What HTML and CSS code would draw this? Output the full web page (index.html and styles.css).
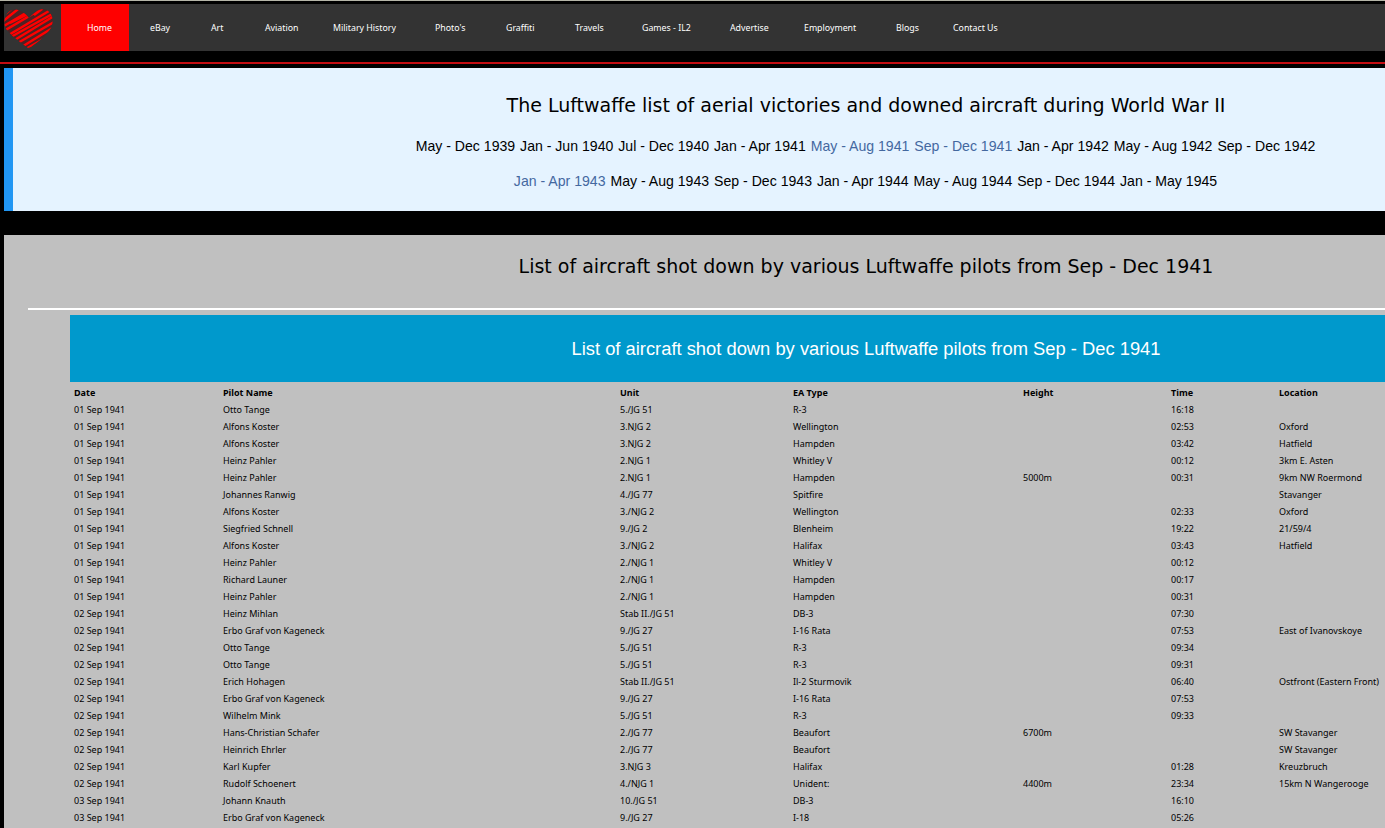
FILE: index.html
```html
<!DOCTYPE html>
<html lang="en">
<head>
<meta charset="utf-8">
<title>Luftwaffe list of aerial victories</title>
<link rel="stylesheet" href="styles.css">
</head>
<body>
<div class="page">
<nav class="topbar">
  <a class="logo" href="#" aria-label="Home">
    <svg width="50" height="44" viewBox="0 0 50 44">
      <defs>
        <clipPath id="heart-shape"><path d="M25 13C20 6 12 2 6 6 0 10-1 18 2 24c4 5 9 9 14 13l8 6 3-1c8-6 15-11 20-19 3-7 2-14-4-18-6-3-12 2-18 8z"/></clipPath>
      </defs>
      <g clip-path="url(#heart-shape)">
        <path class="heart-base" d="M0 0H50V44H0z"/>
        <path class="heart-scribble" d="M-2 12 12 0M-2 17 18 1M-2 22 27 5M0 26 44 0M3 31 50 3M5 33 50 8M9 36 50 11M12 39 50 17M16 43 50 22M20 45 50 28M25 47 50 34M6 18 24 9M30 10 38 4"/>
      </g>
    </svg>
  </a>
  <ul class="menu">
    <li><a class="active" href="#">Home</a></li>
    <li><a href="#">eBay</a></li>
    <li><a href="#">Art</a></li>
    <li><a href="#">Aviation</a></li>
    <li><a href="#">Military History</a></li>
    <li><a href="#">Photo's</a></li>
    <li><a href="#">Graffiti</a></li>
    <li><a href="#">Travels</a></li>
    <li><a href="#">Games - IL2</a></li>
    <li><a href="#">Advertise</a></li>
    <li><a href="#">Employment</a></li>
    <li><a href="#">Blogs</a></li>
    <li><a href="#">Contact Us</a></li>
  </ul>
</nav>
<div class="redline"></div>
<section class="intro">
  <h1 class="title">The Luftwaffe list of aerial victories and downed aircraft during World War II</h1>
  <p class="periods">
    <a href="#">May - Dec 1939</a> <a href="#">Jan - Jun 1940</a> <a href="#">Jul - Dec 1940</a> <a href="#">Jan - Apr 1941</a> <a class="seen" href="#">May - Aug 1941</a> <a class="seen" href="#">Sep - Dec 1941</a> <a href="#">Jan - Apr 1942</a> <a href="#">May - Aug 1942</a> <a href="#">Sep - Dec 1942</a>
  </p>
  <p class="periods">
    <a class="seen" href="#">Jan - Apr 1943</a> <a href="#">May - Aug 1943</a> <a href="#">Sep - Dec 1943</a> <a href="#">Jan - Apr 1944</a> <a href="#">May - Aug 1944</a> <a href="#">Sep - Dec 1944</a> <a href="#">Jan - May 1945</a>
  </p>
</section>
<section class="content">
  <h2 class="title content-title">List of aircraft shot down by various Luftwaffe pilots from Sep - Dec 1941</h2>
  <hr class="rule">
  <div class="listing">
    <div class="band">List of aircraft shot down by various Luftwaffe pilots from Sep - Dec 1941</div>
    <table class="victories">
      <thead>
        <tr><th class="c-date">Date</th><th class="c-pilot">Pilot Name</th><th class="c-unit">Unit</th><th class="c-type">EA Type</th><th class="c-height">Height</th><th class="c-time">Time</th><th>Location</th></tr>
      </thead>
      <tbody>
        <tr><td>01 Sep 1941</td><td>Otto Tange</td><td>5./JG 51</td><td>R-3</td><td></td><td>16:18</td><td></td></tr>
        <tr><td>01 Sep 1941</td><td>Alfons Koster</td><td>3.NJG 2</td><td>Wellington</td><td></td><td>02:53</td><td>Oxford</td></tr>
        <tr><td>01 Sep 1941</td><td>Alfons Koster</td><td>3.NJG 2</td><td>Hampden</td><td></td><td>03:42</td><td>Hatfield</td></tr>
        <tr><td>01 Sep 1941</td><td>Heinz Pahler</td><td>2.NJG 1</td><td>Whitley V</td><td></td><td>00:12</td><td>3km E. Asten</td></tr>
        <tr><td>01 Sep 1941</td><td>Heinz Pahler</td><td>2.NJG 1</td><td>Hampden</td><td>5000m</td><td>00:31</td><td>9km NW Roermond</td></tr>
        <tr><td>01 Sep 1941</td><td>Johannes Ranwig</td><td>4./JG 77</td><td>Spitfire</td><td></td><td></td><td>Stavanger</td></tr>
        <tr><td>01 Sep 1941</td><td>Alfons Koster</td><td>3./NJG 2</td><td>Wellington</td><td></td><td>02:33</td><td>Oxford</td></tr>
        <tr><td>01 Sep 1941</td><td>Siegfried Schnell</td><td>9./JG 2</td><td>Blenheim</td><td></td><td>19:22</td><td>21/59/4</td></tr>
        <tr><td>01 Sep 1941</td><td>Alfons Koster</td><td>3./NJG 2</td><td>Halifax</td><td></td><td>03:43</td><td>Hatfield</td></tr>
        <tr><td>01 Sep 1941</td><td>Heinz Pahler</td><td>2./NJG 1</td><td>Whitley V</td><td></td><td>00:12</td><td></td></tr>
        <tr><td>01 Sep 1941</td><td>Richard Launer</td><td>2./NJG 1</td><td>Hampden</td><td></td><td>00:17</td><td></td></tr>
        <tr><td>01 Sep 1941</td><td>Heinz Pahler</td><td>2./NJG 1</td><td>Hampden</td><td></td><td>00:31</td><td></td></tr>
        <tr><td>02 Sep 1941</td><td>Heinz Mihlan</td><td>Stab II./JG 51</td><td>DB-3</td><td></td><td>07:30</td><td></td></tr>
        <tr><td>02 Sep 1941</td><td>Erbo Graf von Kageneck</td><td>9./JG 27</td><td>I-16 Rata</td><td></td><td>07:53</td><td>East of Ivanovskoye</td></tr>
        <tr><td>02 Sep 1941</td><td>Otto Tange</td><td>5./JG 51</td><td>R-3</td><td></td><td>09:34</td><td></td></tr>
        <tr><td>02 Sep 1941</td><td>Otto Tange</td><td>5./JG 51</td><td>R-3</td><td></td><td>09:31</td><td></td></tr>
        <tr><td>02 Sep 1941</td><td>Erich Hohagen</td><td>Stab II./JG 51</td><td>Il-2 Sturmovik</td><td></td><td>06:40</td><td>Ostfront (Eastern Front)</td></tr>
        <tr><td>02 Sep 1941</td><td>Erbo Graf von Kageneck</td><td>9./JG 27</td><td>I-16 Rata</td><td></td><td>07:53</td><td></td></tr>
        <tr><td>02 Sep 1941</td><td>Wilhelm Mink</td><td>5./JG 51</td><td>R-3</td><td></td><td>09:33</td><td></td></tr>
        <tr><td>02 Sep 1941</td><td>Hans-Christian Schafer</td><td>2./JG 77</td><td>Beaufort</td><td>6700m</td><td></td><td>SW Stavanger</td></tr>
        <tr><td>02 Sep 1941</td><td>Heinrich Ehrler</td><td>2./JG 77</td><td>Beaufort</td><td></td><td></td><td>SW Stavanger</td></tr>
        <tr><td>02 Sep 1941</td><td>Karl Kupfer</td><td>3.NJG 3</td><td>Halifax</td><td></td><td>01:28</td><td>Kreuzbruch</td></tr>
        <tr><td>02 Sep 1941</td><td>Rudolf Schoenert</td><td>4./NJG 1</td><td>Unident:</td><td>4400m</td><td>23:34</td><td>15km N Wangerooge</td></tr>
        <tr><td>03 Sep 1941</td><td>Johann Knauth</td><td>10./JG 51</td><td>DB-3</td><td></td><td>16:10</td><td></td></tr>
        <tr><td>03 Sep 1941</td><td>Erbo Graf von Kageneck</td><td>9./JG 27</td><td>I-18</td><td></td><td>05:26</td><td></td></tr>
      </tbody>
    </table>
  </div>
</section>
</div>
</body>
</html>
```
FILE: styles.css
```css
* { box-sizing: border-box; }
html, body { margin: 0; height: 828px; overflow: hidden; background: #000; }
body { border-top: 1px solid #b5b5a8; }
.page { width: 1728px; padding: 3px 0 0 4px; font-family: "DejaVu Sans", sans-serif; color: #000; }
.topbar { display: flex; height: 47px; background: #333; }
.logo { display: block; width: 57px; padding: 1px 0 0 0; }
.logo svg { display: block; }
.heart-base { fill: #4d2224; }
.heart-scribble { fill: none; stroke: #f00; stroke-width: 2.4; }
.menu { list-style: none; margin: 0; padding: 0; display: grid; grid-template-columns: 68px 61px 54px 68px 102px 71px 69px 67px 88px 74px 92px 57px 100px; font-family: "Noto Sans", sans-serif; }
.menu a { display: block; height: 47px; padding-left: 21px; line-height: 48px; color: #fff; font-size: 8.8px; text-decoration: none; white-space: nowrap; }
.menu a.active { background: #f00; padding-left: 26px; }
.redline { height: 2px; margin: 11px 0 4px -4px; background: #c40d12; }
.intro { height: 143px; padding: 25px 0 0; background: #e5f3ff; border-left: 9px solid #2196f3; text-align: center; }
.title { margin: 0; font-weight: 400; font-size: 19px; line-height: 24px; }
.periods { margin: 0; font-family: "Liberation Sans", sans-serif; font-size: 14.1px; line-height: 17px; }
.intro .title { margin-bottom: 21px; padding-right: 9px; }
.periods + .periods { margin-top: 18px; }
.intro .periods { padding-right: 9px; }
.periods a { color: #000; text-decoration: none; margin-right: 1px; }
.periods a.seen { color: #44689f; }
.content { margin-top: 24px; min-height: 600px; background: #c0c0c0; padding-top: 19px; }
.content-title { text-align: center; }
.rule { height: 2px; margin: 30px 0 5px 24px; border: 0; background: #fff; }
.listing { margin-left: 66px; }
.band { height: 67px; background: #0099cc; color: #fff; font-family: "Liberation Sans", sans-serif; font-size: 18.35px; line-height: 68px; text-align: center; padding-right: 66px; }
.victories { width: 100%; margin-top: 2px; table-layout: fixed; border-collapse: collapse; font-family: "Noto Sans", sans-serif; font-size: 9px; }
.victories th, .victories td { height: 17px; padding: 1px 4px 0; text-align: left; white-space: nowrap; line-height: 16px; }
.victories th { font-weight: 700; }
.c-date { width: 149px; }
.c-pilot { width: 397px; }
.c-unit { width: 173px; }
.c-type { width: 230px; }
.c-height { width: 148px; }
.c-time { width: 108px; }
```
